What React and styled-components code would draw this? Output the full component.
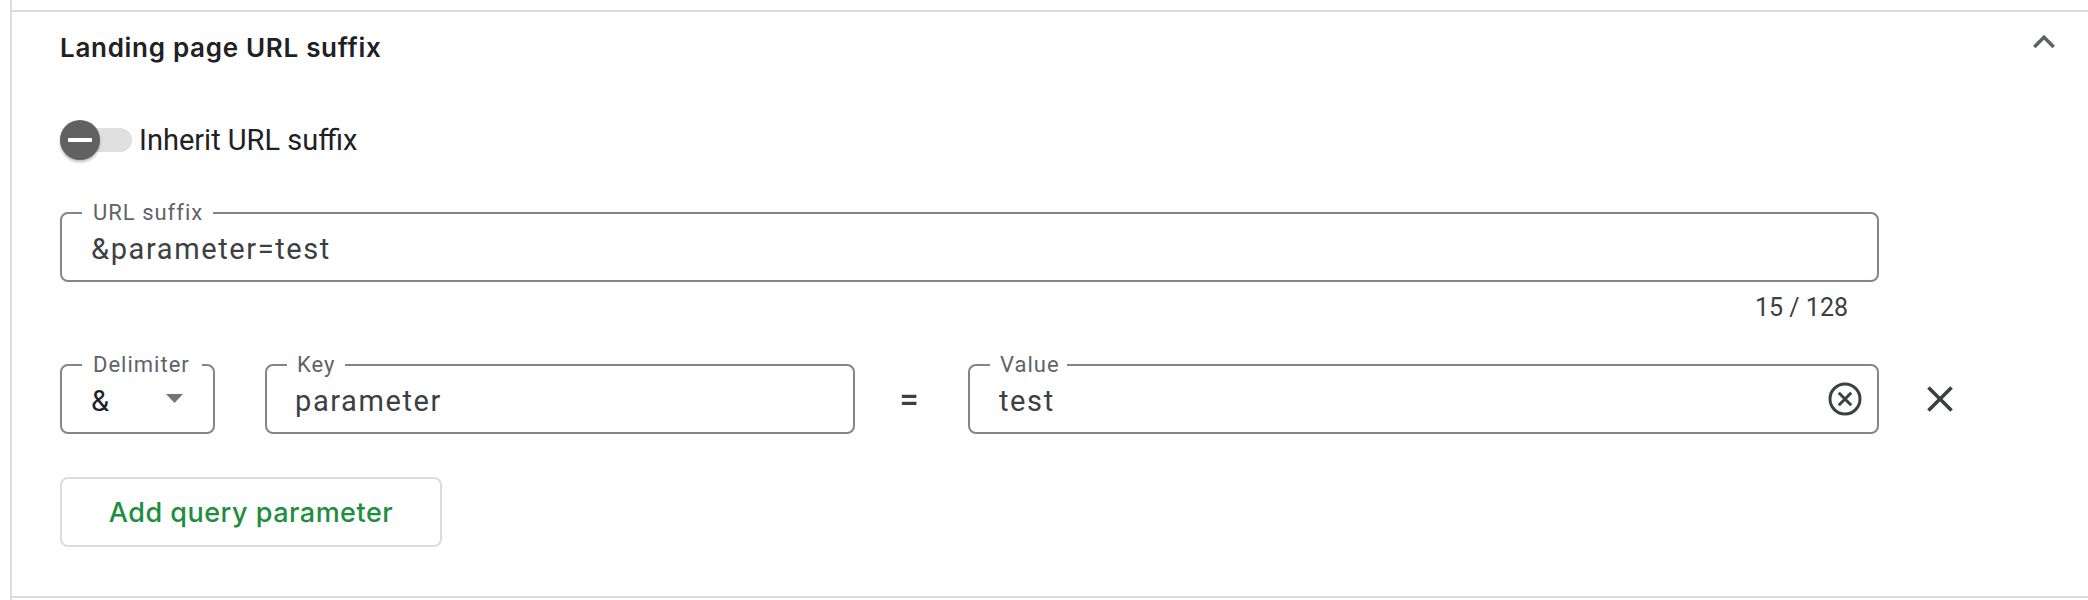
import React from 'react'
import styled, { createGlobalStyle } from 'styled-components'

const GlobalStyle = createGlobalStyle`
  body {
    margin: 0;
    background: #fff;
    font-family: Roboto, 'Liberation Sans', sans-serif;
  }
  * { box-sizing: border-box; }
`

const HEAD_FONT = `Inter, Roboto, sans-serif`

const Page = styled.div`
  margin-left: 10px;
  border-left: 2px solid #dadce0;
  padding-top: 10px;
  height: 600px;
`

const Section = styled.section`
  border-top: 2px solid #dadce0;
  border-bottom: 2px solid #dadce0;
  padding: 0 0 49px 48px;
`

const Header = styled.div`
  display: flex;
  justify-content: space-between;
  align-items: center;
  height: 72px;
  padding-right: 22px;
`

const Title = styled.h2`
  margin: 0;
  font-family: ${HEAD_FONT};
  font-size: 26px;
  font-weight: 600;
  letter-spacing: 0.7px;
  line-height: 30px;
  color: #202124;
`

const IconButton = styled.button`
  display: flex;
  padding: 0;
  border: 0;
  background: none;
  color: ${(p) => p.color || '#3c4043'};
  align-self: ${(p) => p.self || 'center'};
  margin-top: ${(p) => p.top || 0}px;
  margin-left: ${(p) => p.left || 0}px;
  cursor: pointer;
`

const ToggleRow = styled.label`
  display: flex;
  align-items: center;
  gap: 7px;
  height: 40px;
  margin-top: 36px;
  font-size: 29px;
  color: #202124;
`

const Track = styled.span`
  display: flex;
  align-items: center;
  width: 72px;
  height: 24px;
  border-radius: 12px;
  background: #e0e0e0;
`

const Thumb = styled.span`
  display: flex;
  align-items: center;
  justify-content: center;
  flex-shrink: 0;
  width: 40px;
  height: 40px;
  border-radius: 50%;
  background: #616161;
  box-shadow: 0 2px 3px rgba(0, 0, 0, 0.28);
`

const Minus = styled.span`
  width: 24px;
  height: 4px;
  border-radius: 1px;
  background: #fff;
`

const Field = styled.div`
  position: relative;
  display: flex;
  align-items: center;
  flex-shrink: 0;
  width: ${(p) => p.width}px;
  height: 70px;
  margin-top: ${(p) => p.mt || 0}px;
  padding: 4px ${(p) => p.padRight ?? 30}px 0 ${(p) => p.padLeft ?? 29}px;
  border: 2px solid #80868b;
  border-radius: 8px;
  font-size: 29px;
  letter-spacing: 1.6px;
  color: #3c4043;
`

const FloatLabel = styled.span`
  position: absolute;
  top: -12px;
  left: 20px;
  padding: 0 ${(p) => p.pr ?? 10}px 0 ${(p) => p.pl ?? 11}px;
  background: #fff;
  font-size: 22px;
  line-height: 22px;
  letter-spacing: 1px;
  color: #5f6368;
`

const Input = styled.input`
  flex: 1;
  min-width: 0;
  padding: 0;
  border: 0;
  outline: none;
  background: transparent;
  font: inherit;
  letter-spacing: inherit;
  color: inherit;
`

const SelectValue = styled.span`
  flex: 1;
  color: #202124;
`

const Caret = styled.svg`
  margin-top: -6px;
`

const Counter = styled.div`
  width: 1819px;
  margin-top: 10px;
  padding-right: 31px;
  text-align: right;
  font-size: 25px;
  line-height: 31px;
  color: #3c4043;
`

const ParamRow = styled.div`
  display: flex;
  align-items: center;
  margin-top: 41px;
`

const Equals = styled.span`
  width: 113px;
  flex-shrink: 0;
  padding-right: 5px;
  text-align: center;
  font-size: 34px;
  font-weight: 500;
  color: #3c4043;
`

const Spacer = styled.span`
  width: ${(p) => p.size}px;
  flex-shrink: 0;
`

const AddButton = styled.button`
  display: block;
  width: 382px;
  height: 70px;
  margin-top: 43px;
  border: 2px solid #dadce0;
  border-radius: 8px;
  background: #fff;
  font-family: ${HEAD_FONT};
  font-size: 27px;
  font-weight: 500;
  letter-spacing: 0.5px;
  color: #1e8e3e;
  cursor: pointer;
`

const ExpandLess = () => (
  <svg width="44" height="44" viewBox="0 0 24 24" fill="currentColor">
    <path d="M12 8l-6 6 1.41 1.41L12 10.83l4.59 4.58L18 14z" />
  </svg>
)

const CloseIcon = () => (
  <svg width="44" height="44" viewBox="0 0 24 24" fill="currentColor">
    <path d="M19 6.41L17.59 5 12 10.59 6.41 5 5 6.41 10.59 12 5 17.59 6.41 19 12 13.41 17.59 19 19 17.59 13.41 12z" />
  </svg>
)

const ClearIcon = () => (
  <svg width="40" height="40" viewBox="0 0 40 40" fill="none" stroke="currentColor" strokeWidth="3">
    <circle cx="20" cy="20" r="15" />
    <path d="M13.8 13.8l12.4 12.4M26.2 13.8L13.8 26.2" />
  </svg>
)

export default function App() {
  return (
    <>
      <GlobalStyle />
      <Page>
        <Section>
          <Header>
            <Title>Landing page URL suffix</Title>
            <IconButton color="#5f6368" self="flex-start" top={8}>
              <ExpandLess />
            </IconButton>
          </Header>

          <ToggleRow>
            <Track>
              <Thumb>
                <Minus />
              </Thumb>
            </Track>
            Inherit URL suffix
          </ToggleRow>

          <Field width={1819} mt={52}>
            <FloatLabel>URL suffix</FloatLabel>
            <Input defaultValue="&parameter=test" />
          </Field>
          <Counter>15 / 128</Counter>

          <ParamRow>
            <Field width={155}>
              <FloatLabel pr={12}>Delimiter</FloatLabel>
              <SelectValue>&amp;</SelectValue>
              <Caret width="17" height="9" viewBox="0 0 17 9">
                <path d="M0 0h17l-8.5 9z" fill="#757575" />
              </Caret>
            </Field>
            <Spacer size={50} />
            <Field width={590} padLeft={28}>
              <FloatLabel pl={10}>Key</FloatLabel>
              <Input defaultValue="parameter" />
            </Field>
            <Equals>=</Equals>
            <Field width={911} padLeft={29} padRight={12}>
              <FloatLabel pl={10} pr={7}>Value</FloatLabel>
              <Input defaultValue="test" />
              <IconButton top={-4}>
                <ClearIcon />
              </IconButton>
            </Field>
            <IconButton left={39}>
              <CloseIcon />
            </IconButton>
          </ParamRow>

          <AddButton>Add query parameter</AddButton>
        </Section>
      </Page>
    </>
  )
}
